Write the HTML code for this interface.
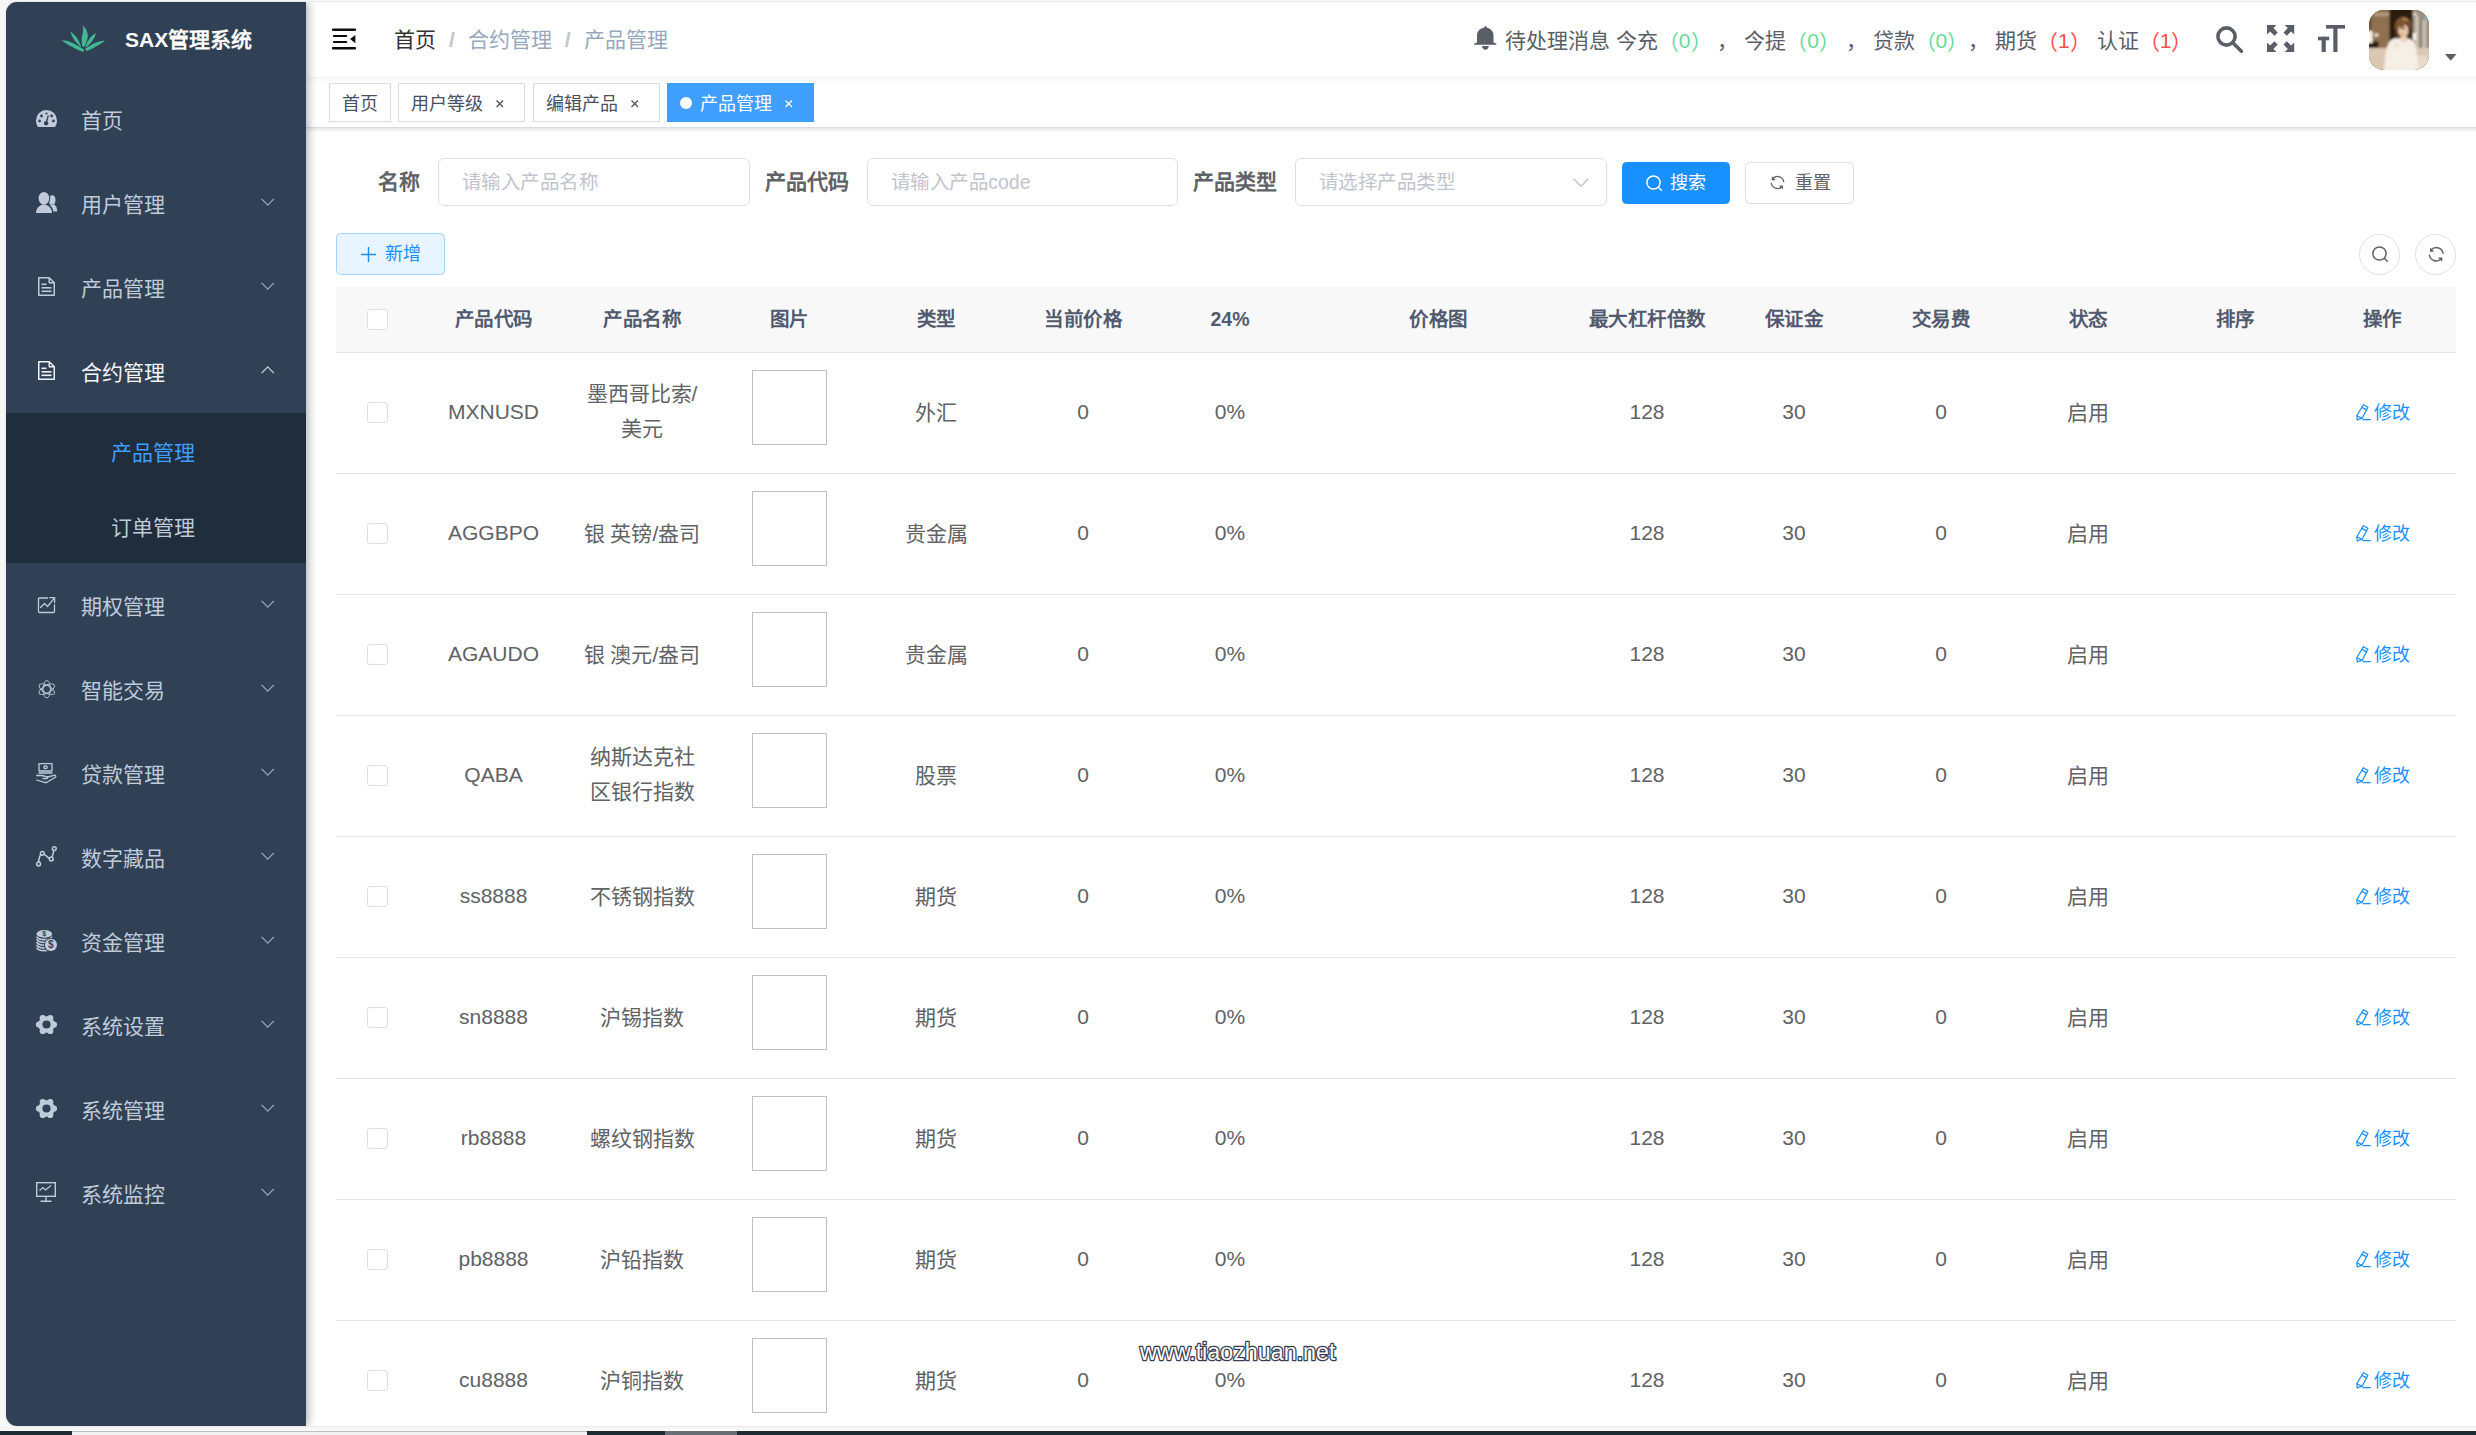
<!DOCTYPE html>
<html lang="zh-CN">
<head>
<meta charset="utf-8">
<title>SAX管理系统</title>
<style>
*{box-sizing:border-box;margin:0;padding:0}
html,body{width:2476px;height:1435px;overflow:hidden;background:#f7f7f7}
body{position:relative;text-spacing-trim:space-all;font-family:"Liberation Sans",sans-serif;font-size:21px;font-weight:400;font-style:normal;color:#606266;line-height:1.2;text-align:left}
div,span,b,i,em,a{font-family:"Liberation Sans",sans-serif}
.a{position:absolute;display:block;white-space:nowrap}
svg{position:absolute;display:block;overflow:visible}
/* frame */
#win{left:6px;top:2px;width:2480px;height:1424px;background:#fff;border-radius:11px 0 0 11px;overflow:hidden;box-shadow:0 0 2px rgba(0,0,0,.18)}
#bt{left:0;top:1431px;width:2476px;height:4px;background:#1f2b33}
#bt1{left:72px;top:1431px;width:515px;height:4px;background:#f3f3f3;border-top:1px solid #bdbdbd}
#bt2{left:665px;top:1431px;width:72px;height:4px;background:#697074}
#btw{left:0;top:1430px;width:2476px;height:1px;background:#fdfdfd}
/* sidebar (coords relative to #win) */
#side{left:0;top:0;width:300px;height:1424px;background:#304156;z-index:5;box-shadow:2px 0 9px rgba(0,21,41,.35)}
#logoT{left:119px;top:0;height:75px;line-height:75px;font-size:21px;font-weight:700;color:#fff}
.mt{left:75px;margin-top:2px;height:84px;line-height:84px;font-size:21px;color:#bfcbd9}
.st{left:105px;margin-top:2px;height:75px;line-height:75px;font-size:21px;color:#bfcbd9}
#sub{left:0;top:411px;width:300px;height:150px;background:#1f2d3d}
/* navbar */
#nav{left:300px;top:0;width:2180px;height:75px;background:#fff;box-shadow:0 1px 6px rgba(0,21,41,.08);z-index:3}
#bc{left:88px;top:0;height:75px;line-height:75px;font-size:21px;color:#97a8be}
#bc b{font-weight:400;color:#303133}
#bc i{font-style:normal;font-weight:700;color:#c0c4cc;margin:0 13px}
#msg{left:1199px;top:1px;height:75px;line-height:75px;font-size:21px;color:#5a5e66}
#msg .g{color:#66db9b}
#msg s{text-decoration:none;position:relative;top:2px}
#msg .r{color:#ff4d4f}
#ava{left:2063px;top:8px;width:60px;height:60px;border-radius:15px;overflow:hidden;background:#8a6a4c}
/* tags */
#tags{left:300px;top:75px;width:2180px;height:51px;background:#fff;border-bottom:1px solid #d8dce5;box-shadow:0 1px 5px 0 rgba(0,0,0,.12),0 0 5px 0 rgba(0,0,0,.04);z-index:2}
.tag{top:6px;height:39px;line-height:40px;border:1px solid #d8dce5;color:#495060;background:#fff;font-size:18px;text-align:left}
.tag.on{background:#409eff;border-color:#409eff;color:#fff}
.tag span{position:absolute;top:0;left:12px;white-space:nowrap}
.tag em{position:absolute;top:0;font-style:normal;font-size:17px;line-height:39px}
.tag u{position:absolute;left:12px;top:12px;width:12px;height:12px;border-radius:50%;background:#fff}
/* form */
.lb{height:48px;line-height:48px;font-size:21px;font-weight:700;color:#606266;text-align:right;width:102px;padding-right:18px;top:156px}
.inp{letter-spacing:-.5px;top:156px;height:48px;border:1px solid #dcdfe6;border-radius:6px;background:#fff;font-size:19.5px;line-height:46px;color:#c0c4cc;padding-left:22.5px}
.btn{height:42px;border-radius:4.5px;font-size:18px;line-height:40px;border:1px solid #dcdfe6;background:#fff;color:#606266}
.btn span{position:absolute;top:0;white-space:nowrap}
.circ{top:231.5px;width:41px;height:41px;border-radius:50%;border:1px solid #dcdfe6;background:#fff}
.ls0{letter-spacing:0}
/* table */
#th{left:330px;top:285px;width:2119.5px;height:65px;background:#f8f8f9;border-bottom:1px solid #dfe6ec}
.h{letter-spacing:-.5px;top:285px;height:65px;line-height:65px;font-size:19.5px;font-weight:700;color:#515a6e;text-align:center}
.c{font-size:21px;color:#606266;text-align:center;line-height:35px}
.ln{left:330px;width:2119.5px;height:1px;background:#dfe6ec}
.cb{width:21px;height:21px;border:1px solid #dcdfe6;border-radius:3px;background:#fff;left:361px}
.im{left:746px;width:75px;height:75px;border:1px solid #c0c0c0;background:#fff}
.ed{left:2368px;font-size:18px;color:#1890ff;line-height:30px;height:30px}
</style>
</head>
<body>
<div class="a" id="win">
<div class="a" id="side">
<svg style="left:55px;top:22px" width="45" height="29" viewBox="0 0 45 29"><g fill="#41b993"><path d="M21.400 1.200C24.500 3.500 26.500 7 26.800 11.100 27 15 25 19.500 23.200 23.100L21.400 22.200C20.300 18.500 20.500 14 21.500 10 22.300 7 22.600 4 21.400 1.200Z"/><path d="M9.300 7.700Q15.500 10.500 20.100 22.200L19.200 22.400Q12.200 16.500 9.300 7.700Z"/><path d="M35.200 8.900Q28 12 24.300 22.800L25.200 23.200Q32.500 17.500 35.200 8.900Z"/><path d="M.7 16.300C7 15.800 15 20.500 23 25.600L22.300 28C16 26 6.500 21 .7 16.300Z"/><path d="M44.100 16.400C38 16.500 30 20.500 24.300 24.600L25 26.900C31 25 39.500 20.500 44.100 16.400Z"/></g></svg>
<div class="a" id="logoT">SAX管理系统</div>
<svg style="left:30px;top:108px" width="21" height="17" viewBox="0 0 21 17" ><path fill="#bfcbd9" d="M10.5 0A10.5 10.5 0 0 0 0 10.5c0 2 .5 3.800 1.400 5.400.3.600.9 1.100 1.700 1.100h14.800c.8 0 1.400-.5 1.700-1.100.9-1.600 1.400-3.400 1.400-5.400A10.500 10.500 0 0 0 10.500 0z"/><g fill="#304156"><circle cx="3.600" cy="11" r="1.400"/><circle cx="5.500" cy="6" r="1.400"/><circle cx="15.600" cy="6" r="1.400"/><circle cx="17.400" cy="11" r="1.400"/><circle cx="10.500" cy="3.500" r="1.100"/><path d="M11.600 5.200l1.300.4-1.500 5.900a2.200 2.200 0 1 1-1.300-.4z"/></g></svg>
<div class="a mt" style="top:75px">首页</div>
<svg style="left:30px;top:190px" width="21.5" height="21" viewBox="0 0 21.500 21" ><g fill="#bfcbd9"><ellipse cx="16.100" cy="8" rx="3.400" ry="4.700"/><path d="M13 12.300C15 13.300 17 13.300 18.300 12.600 20.300 14 21.200 16 21.200 19.400H17.300C17 16.300 15.300 14.300 13 12.300Z"/></g><g fill="#304156" stroke="#304156" stroke-width="2.200" stroke-linejoin="round"><ellipse cx="7.900" cy="6.300" rx="5.300" ry="6.300"/><path d="M0 20.900C0 16.500 2.500 14.300 6.200 12.400H9.600C13.300 14.300 16 16.500 16 20.900Z"/></g><g fill="#bfcbd9"><ellipse cx="7.900" cy="6.300" rx="5.300" ry="6.300"/><path d="M0 20.900C0 16.500 2.500 14.300 6.200 12.400H9.600C13.300 14.300 16 16.500 16 20.900Z"/></g></svg>
<div class="a mt" style="top:159px">用户管理</div>
<svg style="left:254.750px;top:196px" width="13.500" height="8" viewBox="0 0 13.500 8"><path d="M.6.9L6.750 7.100 12.900.9" fill="none" stroke="#9aa7b8" stroke-width="1.300"/></svg>
<svg style="left:32px;top:275px" width="17" height="19" viewBox="0 0 17 19" ><g fill="none" stroke="#bfcbd9" stroke-width="1.5" stroke-linejoin="round"><path d="M.75.75h10.500l5 5v12.500H.75z"/><path d="M11.250.75v5h5"/></g><g fill="#bfcbd9"><rect x="3.500" y="6.500" width="5" height="1.600"/><rect x="3.500" y="10" width="10" height="1.600"/><rect x="3.500" y="13.500" width="10" height="1.600"/></g></svg>
<div class="a mt" style="top:243px">产品管理</div>
<svg style="left:254.750px;top:280px" width="13.500" height="8" viewBox="0 0 13.500 8"><path d="M.6.9L6.750 7.100 12.900.9" fill="none" stroke="#9aa7b8" stroke-width="1.300"/></svg>
<svg style="left:32px;top:359px" width="17" height="19" viewBox="0 0 17 19" ><g fill="none" stroke="#f0f2f5" stroke-width="1.5" stroke-linejoin="round"><path d="M.75.75h10.500l5 5v12.500H.75z"/><path d="M11.250.75v5h5"/></g><g fill="#f0f2f5"><rect x="3.500" y="6.500" width="5" height="1.600"/><rect x="3.500" y="10" width="10" height="1.600"/><rect x="3.500" y="13.500" width="10" height="1.600"/></g></svg>
<div class="a mt" style="top:327px;color:#f4f4f5">合约管理</div>
<svg style="left:254.750px;top:364px" width="13.500" height="8" viewBox="0 0 13.500 8"><path d="M.6 7.100L6.750.9l6.150 6.200" fill="none" stroke="#c8d0da" stroke-width="1.300"/></svg>
<svg style="left:32px;top:594.5px" width="17.5" height="16.5" viewBox="0 0 17.500 16.500" ><g fill="none" stroke="#bfcbd9" stroke-width="1.300" stroke-linejoin="round" stroke-linecap="round"><path d="M9.500 1H1.500a1 1 0 0 0-1 1v12.500a1 1 0 0 0 1 1h14a1 1 0 0 0 1-1V8"/><path d="M2.500 10.500l4-4 3 3L16.500.8"/><path d="M11.800.7h4.800v4.800"/></g></svg>
<div class="a mt" style="top:561px">期权管理</div>
<svg style="left:254.750px;top:598px" width="13.500" height="8" viewBox="0 0 13.500 8"><path d="M.6.9L6.750 7.100 12.900.9" fill="none" stroke="#9aa7b8" stroke-width="1.300"/></svg>
<svg style="left:32px;top:677.5px" width="17.5" height="18.5" viewBox="0 0 17.500 18.500" ><g fill="none" stroke="#bfcbd9" stroke-width=".9"><ellipse cx="8.750" cy="9.250" rx="3.700" ry="8.700"/><ellipse cx="8.750" cy="9.250" rx="3.700" ry="8.700" transform="rotate(60 8.750 9.250)"/><ellipse cx="8.750" cy="9.250" rx="3.700" ry="8.700" transform="rotate(120 8.750 9.250)"/><circle cx="8.750" cy="9.250" r="4.300"/></g></svg>
<div class="a mt" style="top:645px">智能交易</div>
<svg style="left:254.750px;top:682px" width="13.500" height="8" viewBox="0 0 13.500 8"><path d="M.6.9L6.750 7.100 12.900.9" fill="none" stroke="#9aa7b8" stroke-width="1.300"/></svg>
<svg style="left:30px;top:760.5px" width="21" height="20" viewBox="0 0 21 20" ><g fill="none" stroke="#bfcbd9" stroke-width="1.300" stroke-linejoin="round" stroke-linecap="round"><rect x="3" y=".7" width="13" height="7.300"/><ellipse cx="9.500" cy="4.300" rx="1.700" ry="1.300"/><path d="M3 10h13"/><path d="M.7 12.500h5l5 1.200c1.200.3 1.200 1.800 0 1.800H7"/><path d="M11.500 14l6.500-1.700c1.700-.4 2.500 1.100 1.300 1.900L11 19.300c-.8.300-1.600.3-2.400 0L.7 17"/></g></svg>
<div class="a mt" style="top:729px">贷款管理</div>
<svg style="left:254.750px;top:766px" width="13.500" height="8" viewBox="0 0 13.500 8"><path d="M.6.9L6.750 7.100 12.900.9" fill="none" stroke="#9aa7b8" stroke-width="1.300"/></svg>
<svg style="left:30px;top:844px" width="21" height="21" viewBox="0 0 21 21" ><g fill="none" stroke="#bfcbd9" stroke-width="1.500" stroke-linecap="round"><path d="M2.600 16.400C3 11 4 8.500 6 7.500c2.500-1 5 4.800 8.300 5.400 2-.2 2.600-4.700 3.600-8.400"/><circle cx="2.600" cy="18" r="1.900" fill="#304156"/><circle cx="6.300" cy="7.300" r="1.900" fill="#304156"/><circle cx="15.300" cy="13" r="1.900" fill="#304156"/><circle cx="18.300" cy="2.700" r="1.900" fill="#304156"/></g></svg>
<div class="a mt" style="top:813px">数字藏品</div>
<svg style="left:254.750px;top:850px" width="13.500" height="8" viewBox="0 0 13.500 8"><path d="M.6.9L6.750 7.100 12.900.9" fill="none" stroke="#9aa7b8" stroke-width="1.300"/></svg>
<svg style="left:30px;top:928px" width="21" height="21" viewBox="0 0 21 21" ><ellipse cx="8.300" cy="3.900" rx="7.900" ry="3.800" fill="#bfcbd9"/><path d="M.9 6.40A7.4 3.300 0 0 0 15.700 6.40" fill="none" stroke="#bfcbd9" stroke-width="1.700"/><path d="M.9 9.15A7.4 3.300 0 0 0 15.700 9.15" fill="none" stroke="#bfcbd9" stroke-width="1.700"/><path d="M.9 11.90A7.4 3.300 0 0 0 15.700 11.90" fill="none" stroke="#bfcbd9" stroke-width="1.700"/><path d="M.9 14.65A7.4 3.300 0 0 0 15.700 14.65" fill="none" stroke="#bfcbd9" stroke-width="1.700"/><path d="M.9 17.40A7.4 3.300 0 0 0 15.700 17.40" fill="none" stroke="#bfcbd9" stroke-width="1.700"/><circle cx="14.900" cy="14.900" r="7.100" fill="#304156"/><circle cx="14.900" cy="14.900" r="6.100" fill="#bfcbd9"/><text x="8.300" y="6.300" font-size="7" font-weight="700" text-anchor="middle" fill="#304156" font-family="Liberation Sans,sans-serif">$</text><text x="14.900" y="18.400" font-size="10" font-weight="700" text-anchor="middle" fill="#304156" font-family="Liberation Sans,sans-serif">$</text></svg>
<div class="a mt" style="top:897px">资金管理</div>
<svg style="left:254.750px;top:934px" width="13.500" height="8" viewBox="0 0 13.500 8"><path d="M.6.9L6.750 7.100 12.900.9" fill="none" stroke="#9aa7b8" stroke-width="1.300"/></svg>
<svg style="left:30px;top:1012px" width="21" height="21" viewBox="0 0 21 21" ><g fill="#bfcbd9"><circle cx="10.5" cy="10.5" r="8.300"/><circle cx="18.00" cy="10.50" r="3.100"/><circle cx="14.25" cy="17.00" r="3.100"/><circle cx="6.75" cy="17.00" r="3.100"/><circle cx="3.00" cy="10.50" r="3.100"/><circle cx="6.75" cy="4.00" r="3.100"/><circle cx="14.25" cy="4.00" r="3.100"/></g><circle cx="10.5" cy="10.5" r="4.100" fill="#304156"/></svg>
<div class="a mt" style="top:981px">系统设置</div>
<svg style="left:254.750px;top:1018px" width="13.500" height="8" viewBox="0 0 13.500 8"><path d="M.6.9L6.750 7.100 12.900.9" fill="none" stroke="#9aa7b8" stroke-width="1.300"/></svg>
<svg style="left:30px;top:1096px" width="21" height="21" viewBox="0 0 21 21" ><g fill="#bfcbd9"><circle cx="10.5" cy="10.5" r="8.300"/><circle cx="18.00" cy="10.50" r="3.100"/><circle cx="14.25" cy="17.00" r="3.100"/><circle cx="6.75" cy="17.00" r="3.100"/><circle cx="3.00" cy="10.50" r="3.100"/><circle cx="6.75" cy="4.00" r="3.100"/><circle cx="14.25" cy="4.00" r="3.100"/></g><circle cx="10.5" cy="10.5" r="4.100" fill="#304156"/></svg>
<div class="a mt" style="top:1065px">系统管理</div>
<svg style="left:254.750px;top:1102px" width="13.500" height="8" viewBox="0 0 13.500 8"><path d="M.6.9L6.750 7.100 12.900.9" fill="none" stroke="#9aa7b8" stroke-width="1.300"/></svg>
<svg style="left:30px;top:1180px" width="20" height="20" viewBox="0 0 20 20" ><g fill="none" stroke="#bfcbd9" stroke-width="1.400" stroke-linejoin="miter"><rect x=".7" y=".7" width="18.600" height="13.600"/><path d="M10 14.300v4.500M4.500 19.200h11"/><path d="M3.500 8.500l3.500-3 2.500 2.500 5.500-4.500" stroke-width="1.200"/></g></svg>
<div class="a mt" style="top:1149px">系统监控</div>
<svg style="left:254.750px;top:1186px" width="13.500" height="8" viewBox="0 0 13.500 8"><path d="M.6.9L6.750 7.100 12.900.9" fill="none" stroke="#9aa7b8" stroke-width="1.300"/></svg>
<div class="a" id="sub"></div>
<div class="a st" style="top:411px;color:#409eff">产品管理</div>
<div class="a st" style="top:486px">订单管理</div>
</div>
<div class="a" id="nav">
<svg style="left:26px;top:26px" width="24" height="22" viewBox="0 0 24 22"><g fill="#0c0c0c"><rect x="0" y=".4" width="24" height="2.500" rx=".8"/><rect x=".9" y="6.900" width="14.300" height="2.150" rx=".8"/><rect x=".9" y="12.900" width="14.300" height="2.150" rx=".8"/><rect x="0" y="18.900" width="24" height="2.500" rx=".8"/><path d="M23.400 7v8.200l-5.300-4.100z"/></g></svg>
<div class="a" id="bc"><b>首页</b><i>/</i>合约管理<i>/</i>产品管理</div>
<svg style="left:1168px;top:24px" width="22.500" height="24" viewBox="0 0 22.500 24"><g fill="#5a5e66"><path d="M10.400 1.600C10.400.6 10.900 0 11.500 0 12.100 0 12.600.6 12.600 1.600 16.500 2.300 19.500 5.500 19.500 9.500V16.600L22.300 17.600V18.800H.2V17.600L3 16.600V9.500C3 5.500 6 2.300 10.400 1.600Z"/><path d="M8 20H14.800C14.500 22.300 13.200 23.800 11.400 23.800 9.600 23.800 8.300 22.300 8 20Z"/></g></svg>
<div class="a" id="msg">待处理消息 今充<span class="g"><s>（</s>0<s>）</s></span> ， 今提<span class="g"><s>（</s>0<s>）</s></span> ， 贷款<span class="g"><s>（</s>0<s>）</s></span>， 期货<span class="r"><s>（</s>1<s>）</s></span> 认证<span class="r"><s>（</s>1<s>）</s></span></div>
<svg style="left:1909.500px;top:24px" width="27.500" height="27" viewBox="0 0 27.500 27"><g fill="none" stroke="#5a5e66" stroke-width="3.600"><circle cx="10.500" cy="10.500" r="8.600"/><path d="M16.800 16.800l8.600 8.400" stroke-linecap="round"/></g></svg>
<svg style="left:1960.800px;top:23px" width="27.200" height="27" viewBox="0 0 27.200 27"><g fill="#5a5e66"><path d="M0 0h9.500L6.400 3.100l4.300 4.300-3.300 3.300-4.300-4.300L0 9.500z"/><path d="M0 0h9.500L6.400 3.100l4.300 4.300-3.300 3.300-4.300-4.300L0 9.500z" transform="translate(27.200 0) scale(-1 1)"/><path d="M0 0h9.500L6.400 3.100l4.300 4.300-3.300 3.300-4.300-4.300L0 9.500z" transform="translate(0 27) scale(1 -1)"/><path d="M0 0h9.500L6.400 3.100l4.300 4.300-3.300 3.300-4.300-4.300L0 9.500z" transform="translate(27.200 27) scale(-1 -1)"/></g></svg>
<svg style="left:2012px;top:23px" width="27" height="27" viewBox="0 0 27 27"><g fill="#5a5e66"><rect x="8" y="0" width="19" height="3.600"/><rect x="15.300" y="0" width="4.200" height="27"/><rect x="0" y="11.700" width="11.200" height="3.600"/><rect x="3.600" y="11.700" width="4.200" height="15.300"/></g></svg>
<div class="a" id="ava"><svg style="left:0;top:0" width="60" height="60" viewBox="0 0 60 60"><defs><filter id="bl" x="-10%" y="-10%" width="120%" height="120%"><feGaussianBlur stdDeviation=".9"/></filter></defs><rect width="60" height="60" fill="#8e6f4e"/><g filter="url(#bl)"><rect x="-6" y="-6" width="28" height="46" fill="#8f7050"/><rect x="5" y="3" width="15" height="3" fill="#b29c82"/><rect x="-6" y="6" width="9" height="34" fill="#755638"/><rect x="20.500" y="-6" width="24" height="37" fill="#2a1c11"/><rect x="43.500" y="-6" width="24" height="56" fill="#9d9080"/><rect x="46" y="6" width="4" height="42" fill="#c9c0b2"/><rect x="53" y="10" width="4.500" height="36" fill="#c4bbad"/><rect x="50.500" y="8" width="2" height="40" fill="#7f7466"/><rect x="-6" y="38" width="74" height="30" fill="#dbc8b3"/><rect x="44" y="46" width="24" height="22" fill="#e6dccb"/><rect x="-6" y="31.500" width="15.500" height="6.500" fill="#2d1f14"/><rect x="-6" y="21" width="9.500" height="12" fill="#fbf5ec"/><rect x="5.500" y="23.500" width="4" height="3" fill="#f3e6d2"/><rect x="44" y="23" width="3" height="7" fill="#fbf8f2"/><rect x="44.500" y="3" width="3" height="2.500" fill="#f1ede6"/><circle cx="58" cy="8" r="1.800" fill="#35d3d6"/><path d="M15.500 70C15 48 17 36 21 31c3-3 8-3.500 12-3 5-.5 10 1 12 4 3 5 4 16 4 38z" fill="#f6efe6"/><path d="M31 30l1.500-3.500h5L39 30l-4 3z" fill="#ecd3bd"/><ellipse cx="34.300" cy="20.500" rx="5.300" ry="6.800" fill="#e9c6a6"/><path d="M26 21c-1.500-9 3-14.500 9-14 6 .5 8.500 6 6.500 13.500-1-5-2.500-7.500-5-8-1 3.500-2.500 6-4.500 7.500-.5-2-1-3.500-2-4-1.500 1.500-2.500 3.500-4 5z" fill="#80542f"/><path d="M33 8c3-1 6 1 7 4-2-1.500-4-2-6-1.500z" fill="#b5855a"/><path d="M26 20c0 4 1 7 2.500 9l2-1c-1.500-2.500-2-5-2-8z" fill="#5c3a20"/><path d="M41 19c.5 4 0 7-1 9l-1.500-1c1-2.500 1.200-5 1-8z" fill="#5c3a20"/><circle cx="35.300" cy="18.500" r=".9" fill="#3a2417"/><ellipse cx="33" cy="24.300" rx="1" ry=".6" fill="#c9675a"/><path d="M24 33c1-1.500 4-1.500 6 0l1 4-5 1z" fill="#f3e3d3"/></g></svg></div>
<svg style="left:2138.500px;top:52px" width="11.500" height="6.700" viewBox="0 0 11.500 6.700"><path d="M0 0h11.500L5.750 6.700z" fill="#5a5e66"/></svg>
</div>
<div class="a" id="tags">
<div class="a tag" style="left:23.250px;width:61.500px"><span>首页</span></div>
<div class="a tag" style="left:92.250px;width:126.500px"><span>用户等级</span><svg style="left:97px;top:15.5px" width="7.500" height="7.500" viewBox="0 0 7.500 7.500"><path d="M.5.5l6.500 6.500M7 .5L.5 7" stroke="#495060" stroke-width="1.250" fill="none"/></svg></div>
<div class="a tag" style="left:227.250px;width:126.500px"><span>编辑产品</span><svg style="left:97px;top:15.5px" width="7.500" height="7.500" viewBox="0 0 7.500 7.500"><path d="M.5.5l6.500 6.500M7 .5L.5 7" stroke="#495060" stroke-width="1.250" fill="none"/></svg></div>
<div class="a tag on" style="left:361px;width:147px"><u style="left:12px;top:13px"></u><span style="left:32px">产品管理</span><svg style="left:117.25px;top:15.5px" width="7.500" height="7.500" viewBox="0 0 7.500 7.500"><path d="M.5.5l6.500 6.500M7 .5L.5 7" stroke="#fff" stroke-width="1.250" fill="none"/></svg></div>
</div>
<div class="a lb" style="left:330px">名称</div>
<div class="a inp" style="left:432.250px;width:311.250px">请输入产品名称</div>
<div class="a lb" style="left:758.500px">产品代码</div>
<div class="a inp" style="left:861.250px;width:310.500px">请输入产品<span class="ls0">code</span></div>
<div class="a lb" style="left:1186.500px">产品类型</div>
<div class="a inp" style="left:1289.250px;width:311.250px">请选择产品类型</div>
<svg style="left:1567px;top:175.500px" width="16" height="9.500" viewBox="0 0 16 9.500"><path d="M.7.800L8 8.300 15.300.8" fill="none" stroke="#c0c4cc" stroke-width="1.400"/></svg>
<div class="a btn" style="left:1616px;top:160px;width:108px;background:#1890ff;border-color:#1890ff;color:#fff"><svg style="left:23px;top:11.5px" width="16" height="16" viewBox="0 0 16 16"><g fill="none" stroke="#fff" stroke-width="1.500"><circle cx="7.500" cy="7.500" r="6.600"/><path d="M12.300 12.300l3 3" stroke-linecap="round"/></g></svg><span style="left:47px">搜索</span></div>
<div class="a btn" style="left:1739px;top:160px;width:108.750px"><svg style="left:24px;top:11.5px" width="15" height="15" viewBox="0 0 15 15"><g fill="none" stroke="#606266" stroke-width="1.250"><path d="M2.900 3.500A6.300 6.300 0 0 1 13.800 7.300"/><path d="M1.200 7.700A6.300 6.300 0 0 0 12.100 11.500"/></g><g fill="#606266"><path d="M1.900 1.300v4.100l3.800-.5z"/><path d="M9.100 10.500h4l-.3 3.900z"/></g></svg><span style="left:49px">重置</span></div>
<div class="a btn" style="left:330px;top:231px;width:108.500px;background:#e8f4ff;border-color:#a3d3ff;color:#1890ff"><svg style="left:24px;top:12.500px" width="15" height="15" viewBox="0 0 15 15"><path d="M7.500 0v15M0 7.500h15" stroke="#1890ff" stroke-width="1.400" fill="none"/></svg><span style="left:47.500px">新增</span></div>
<div class="a circ" style="left:2353px"><svg style="left:11.5px;top:11.5px" width="16" height="16" viewBox="0 0 16 16"><g fill="none" stroke="#606266" stroke-width="1.500"><circle cx="7.500" cy="7.500" r="6.600"/><path d="M12.300 12.300l3 3" stroke-linecap="round"/></g></svg></div>
<div class="a circ" style="left:2409px"><svg style="left:11.5px;top:11.5px" width="16.5" height="16.5" viewBox="0 0 15 15"><g fill="none" stroke="#606266" stroke-width="1.250"><path d="M2.900 3.500A6.300 6.300 0 0 1 13.800 7.300"/><path d="M1.200 7.700A6.300 6.300 0 0 0 12.100 11.500"/></g><g fill="#606266"><path d="M1.900 1.300v4.100l3.800-.5z"/><path d="M9.100 10.500h4l-.3 3.900z"/></g></svg></div>
<div class="a" id="th" style="height:66px"></div>
<div class="a cb" style="top:307px"></div>
<div class="a h" style="left:412.5px;width:150px">产品代码</div>
<div class="a h" style="left:562.5px;width:147px">产品名称</div>
<div class="a h" style="left:709.5px;width:147px">图片</div>
<div class="a h" style="left:856.5px;width:147px">类型</div>
<div class="a h" style="left:1003.5px;width:147px">当前价格</div>
<div class="a h" style="left:1150.5px;width:147px"><span class="ls0">24%</span></div>
<div class="a h" style="left:1297.5px;width:270px">价格图</div>
<div class="a h" style="left:1567.5px;width:147px">最大杠杆倍数</div>
<div class="a h" style="left:1714.5px;width:147px">保证金</div>
<div class="a h" style="left:1861.5px;width:147px">交易费</div>
<div class="a h" style="left:2008.5px;width:147px">状态</div>
<div class="a h" style="left:2155.5px;width:147px">排序</div>
<div class="a h" style="left:2302.5px;width:147px">操作</div>
<div class="a cb" style="top:400px"></div>
<div class="a c" style="left:412.5px;width:150px;top:392.0px">MXNUSD</div>
<div class="a c" style="left:562.5px;width:147px;top:374px">墨西哥比索/</div>
<div class="a c" style="left:562.5px;width:147px;top:409px">美元</div>
<div class="a im" style="top:368px"></div>
<div class="a c" style="left:856.5px;width:147px;top:392.5px">外汇</div>
<div class="a c" style="left:1003.5px;width:147px;top:392.0px">0</div>
<div class="a c" style="left:1150.5px;width:147px;top:392.0px">0%</div>
<div class="a c" style="left:1567.5px;width:147px;top:392.0px">128</div>
<div class="a c" style="left:1714.5px;width:147px;top:392.0px">30</div>
<div class="a c" style="left:1861.5px;width:147px;top:392.0px">0</div>
<div class="a c" style="left:2008.5px;width:147px;top:392.5px">启用</div>
<svg style="left:2350.2px;top:401.5px" width="15" height="16.500" viewBox="0 0 15 16.500"><g fill="none" stroke="#1890ff" stroke-width="1.250" stroke-linejoin="round" stroke-linecap="round"><path d="M7.300.7l4.600 2.500-5.800 11L1.300 16l-.5-4.300z"/><path d="M5.900 3.400l4.600 2.500"/><path d="M.9 11.800l4.900 2.600"/><path d="M7 15.700h7.300"/></g></svg>
<div class="a ed" style="top:396px">修改</div>
<div class="a ln" style="top:471px"></div>
<div class="a cb" style="top:521px"></div>
<div class="a c" style="left:412.5px;width:150px;top:513.0px">AGGBPO</div>
<div class="a c" style="left:562.5px;width:147px;top:513.5px">银 英镑/盎司</div>
<div class="a im" style="top:489px"></div>
<div class="a c" style="left:856.5px;width:147px;top:513.5px">贵金属</div>
<div class="a c" style="left:1003.5px;width:147px;top:513.0px">0</div>
<div class="a c" style="left:1150.5px;width:147px;top:513.0px">0%</div>
<div class="a c" style="left:1567.5px;width:147px;top:513.0px">128</div>
<div class="a c" style="left:1714.5px;width:147px;top:513.0px">30</div>
<div class="a c" style="left:1861.5px;width:147px;top:513.0px">0</div>
<div class="a c" style="left:2008.5px;width:147px;top:513.5px">启用</div>
<svg style="left:2350.2px;top:522.5px" width="15" height="16.500" viewBox="0 0 15 16.500"><g fill="none" stroke="#1890ff" stroke-width="1.250" stroke-linejoin="round" stroke-linecap="round"><path d="M7.300.7l4.600 2.500-5.800 11L1.300 16l-.5-4.300z"/><path d="M5.900 3.400l4.600 2.500"/><path d="M.9 11.800l4.900 2.600"/><path d="M7 15.700h7.300"/></g></svg>
<div class="a ed" style="top:517px">修改</div>
<div class="a ln" style="top:592px"></div>
<div class="a cb" style="top:642px"></div>
<div class="a c" style="left:412.5px;width:150px;top:634.0px">AGAUDO</div>
<div class="a c" style="left:562.5px;width:147px;top:634.5px">银 澳元/盎司</div>
<div class="a im" style="top:610px"></div>
<div class="a c" style="left:856.5px;width:147px;top:634.5px">贵金属</div>
<div class="a c" style="left:1003.5px;width:147px;top:634.0px">0</div>
<div class="a c" style="left:1150.5px;width:147px;top:634.0px">0%</div>
<div class="a c" style="left:1567.5px;width:147px;top:634.0px">128</div>
<div class="a c" style="left:1714.5px;width:147px;top:634.0px">30</div>
<div class="a c" style="left:1861.5px;width:147px;top:634.0px">0</div>
<div class="a c" style="left:2008.5px;width:147px;top:634.5px">启用</div>
<svg style="left:2350.2px;top:643.5px" width="15" height="16.500" viewBox="0 0 15 16.500"><g fill="none" stroke="#1890ff" stroke-width="1.250" stroke-linejoin="round" stroke-linecap="round"><path d="M7.300.7l4.600 2.500-5.800 11L1.300 16l-.5-4.300z"/><path d="M5.900 3.400l4.600 2.500"/><path d="M.9 11.800l4.900 2.600"/><path d="M7 15.700h7.300"/></g></svg>
<div class="a ed" style="top:638px">修改</div>
<div class="a ln" style="top:713px"></div>
<div class="a cb" style="top:763px"></div>
<div class="a c" style="left:412.5px;width:150px;top:755.0px">QABA</div>
<div class="a c" style="left:562.5px;width:147px;top:737px">纳斯达克社</div>
<div class="a c" style="left:562.5px;width:147px;top:772px">区银行指数</div>
<div class="a im" style="top:731px"></div>
<div class="a c" style="left:856.5px;width:147px;top:755.5px">股票</div>
<div class="a c" style="left:1003.5px;width:147px;top:755.0px">0</div>
<div class="a c" style="left:1150.5px;width:147px;top:755.0px">0%</div>
<div class="a c" style="left:1567.5px;width:147px;top:755.0px">128</div>
<div class="a c" style="left:1714.5px;width:147px;top:755.0px">30</div>
<div class="a c" style="left:1861.5px;width:147px;top:755.0px">0</div>
<div class="a c" style="left:2008.5px;width:147px;top:755.5px">启用</div>
<svg style="left:2350.2px;top:764.5px" width="15" height="16.500" viewBox="0 0 15 16.500"><g fill="none" stroke="#1890ff" stroke-width="1.250" stroke-linejoin="round" stroke-linecap="round"><path d="M7.300.7l4.600 2.500-5.800 11L1.300 16l-.5-4.300z"/><path d="M5.900 3.400l4.600 2.500"/><path d="M.9 11.800l4.900 2.600"/><path d="M7 15.700h7.300"/></g></svg>
<div class="a ed" style="top:759px">修改</div>
<div class="a ln" style="top:834px"></div>
<div class="a cb" style="top:884px"></div>
<div class="a c" style="left:412.5px;width:150px;top:876.0px">ss8888</div>
<div class="a c" style="left:562.5px;width:147px;top:876.5px">不锈钢指数</div>
<div class="a im" style="top:852px"></div>
<div class="a c" style="left:856.5px;width:147px;top:876.5px">期货</div>
<div class="a c" style="left:1003.5px;width:147px;top:876.0px">0</div>
<div class="a c" style="left:1150.5px;width:147px;top:876.0px">0%</div>
<div class="a c" style="left:1567.5px;width:147px;top:876.0px">128</div>
<div class="a c" style="left:1714.5px;width:147px;top:876.0px">30</div>
<div class="a c" style="left:1861.5px;width:147px;top:876.0px">0</div>
<div class="a c" style="left:2008.5px;width:147px;top:876.5px">启用</div>
<svg style="left:2350.2px;top:885.5px" width="15" height="16.500" viewBox="0 0 15 16.500"><g fill="none" stroke="#1890ff" stroke-width="1.250" stroke-linejoin="round" stroke-linecap="round"><path d="M7.300.7l4.600 2.500-5.800 11L1.300 16l-.5-4.300z"/><path d="M5.900 3.400l4.600 2.500"/><path d="M.9 11.800l4.900 2.600"/><path d="M7 15.700h7.300"/></g></svg>
<div class="a ed" style="top:880px">修改</div>
<div class="a ln" style="top:955px"></div>
<div class="a cb" style="top:1005px"></div>
<div class="a c" style="left:412.5px;width:150px;top:997.0px">sn8888</div>
<div class="a c" style="left:562.5px;width:147px;top:997.5px">沪锡指数</div>
<div class="a im" style="top:973px"></div>
<div class="a c" style="left:856.5px;width:147px;top:997.5px">期货</div>
<div class="a c" style="left:1003.5px;width:147px;top:997.0px">0</div>
<div class="a c" style="left:1150.5px;width:147px;top:997.0px">0%</div>
<div class="a c" style="left:1567.5px;width:147px;top:997.0px">128</div>
<div class="a c" style="left:1714.5px;width:147px;top:997.0px">30</div>
<div class="a c" style="left:1861.5px;width:147px;top:997.0px">0</div>
<div class="a c" style="left:2008.5px;width:147px;top:997.5px">启用</div>
<svg style="left:2350.2px;top:1006.5px" width="15" height="16.500" viewBox="0 0 15 16.500"><g fill="none" stroke="#1890ff" stroke-width="1.250" stroke-linejoin="round" stroke-linecap="round"><path d="M7.300.7l4.600 2.500-5.800 11L1.300 16l-.5-4.300z"/><path d="M5.900 3.400l4.600 2.500"/><path d="M.9 11.800l4.900 2.600"/><path d="M7 15.700h7.300"/></g></svg>
<div class="a ed" style="top:1001px">修改</div>
<div class="a ln" style="top:1076px"></div>
<div class="a cb" style="top:1126px"></div>
<div class="a c" style="left:412.5px;width:150px;top:1118.0px">rb8888</div>
<div class="a c" style="left:562.5px;width:147px;top:1118.5px">螺纹钢指数</div>
<div class="a im" style="top:1094px"></div>
<div class="a c" style="left:856.5px;width:147px;top:1118.5px">期货</div>
<div class="a c" style="left:1003.5px;width:147px;top:1118.0px">0</div>
<div class="a c" style="left:1150.5px;width:147px;top:1118.0px">0%</div>
<div class="a c" style="left:1567.5px;width:147px;top:1118.0px">128</div>
<div class="a c" style="left:1714.5px;width:147px;top:1118.0px">30</div>
<div class="a c" style="left:1861.5px;width:147px;top:1118.0px">0</div>
<div class="a c" style="left:2008.5px;width:147px;top:1118.5px">启用</div>
<svg style="left:2350.2px;top:1127.5px" width="15" height="16.500" viewBox="0 0 15 16.500"><g fill="none" stroke="#1890ff" stroke-width="1.250" stroke-linejoin="round" stroke-linecap="round"><path d="M7.300.7l4.600 2.500-5.800 11L1.300 16l-.5-4.300z"/><path d="M5.900 3.400l4.600 2.500"/><path d="M.9 11.800l4.900 2.600"/><path d="M7 15.700h7.300"/></g></svg>
<div class="a ed" style="top:1122px">修改</div>
<div class="a ln" style="top:1197px"></div>
<div class="a cb" style="top:1247px"></div>
<div class="a c" style="left:412.5px;width:150px;top:1239.0px">pb8888</div>
<div class="a c" style="left:562.5px;width:147px;top:1239.5px">沪铅指数</div>
<div class="a im" style="top:1215px"></div>
<div class="a c" style="left:856.5px;width:147px;top:1239.5px">期货</div>
<div class="a c" style="left:1003.5px;width:147px;top:1239.0px">0</div>
<div class="a c" style="left:1150.5px;width:147px;top:1239.0px">0%</div>
<div class="a c" style="left:1567.5px;width:147px;top:1239.0px">128</div>
<div class="a c" style="left:1714.5px;width:147px;top:1239.0px">30</div>
<div class="a c" style="left:1861.5px;width:147px;top:1239.0px">0</div>
<div class="a c" style="left:2008.5px;width:147px;top:1239.5px">启用</div>
<svg style="left:2350.2px;top:1248.5px" width="15" height="16.500" viewBox="0 0 15 16.500"><g fill="none" stroke="#1890ff" stroke-width="1.250" stroke-linejoin="round" stroke-linecap="round"><path d="M7.300.7l4.600 2.500-5.800 11L1.300 16l-.5-4.300z"/><path d="M5.900 3.400l4.600 2.500"/><path d="M.9 11.800l4.900 2.600"/><path d="M7 15.700h7.300"/></g></svg>
<div class="a ed" style="top:1243px">修改</div>
<div class="a ln" style="top:1318px"></div>
<div class="a cb" style="top:1368px"></div>
<div class="a c" style="left:412.5px;width:150px;top:1360.0px">cu8888</div>
<div class="a c" style="left:562.5px;width:147px;top:1360.5px">沪铜指数</div>
<div class="a im" style="top:1336px"></div>
<div class="a c" style="left:856.5px;width:147px;top:1360.5px">期货</div>
<div class="a c" style="left:1003.5px;width:147px;top:1360.0px">0</div>
<div class="a c" style="left:1150.5px;width:147px;top:1360.0px">0%</div>
<div class="a c" style="left:1567.5px;width:147px;top:1360.0px">128</div>
<div class="a c" style="left:1714.5px;width:147px;top:1360.0px">30</div>
<div class="a c" style="left:1861.5px;width:147px;top:1360.0px">0</div>
<div class="a c" style="left:2008.5px;width:147px;top:1360.5px">启用</div>
<svg style="left:2350.2px;top:1369.5px" width="15" height="16.500" viewBox="0 0 15 16.500"><g fill="none" stroke="#1890ff" stroke-width="1.250" stroke-linejoin="round" stroke-linecap="round"><path d="M7.300.7l4.600 2.500-5.800 11L1.300 16l-.5-4.300z"/><path d="M5.900 3.400l4.600 2.500"/><path d="M.9 11.800l4.900 2.600"/><path d="M7 15.700h7.300"/></g></svg>
<div class="a ed" style="top:1364px">修改</div>
<div class="a ln" style="top:1439px"></div>
<svg style="left:1128px;top:1332px" width="210" height="36" viewBox="0 0 210 36"><text x="6" y="26" font-family="Liberation Sans,sans-serif" font-size="23.500" fill="#fff" stroke="#363d4f" stroke-width="2.600" paint-order="stroke" stroke-linejoin="round" textLength="195.500" lengthAdjust="spacingAndGlyphs">www.tiaozhuan.net</text></svg>
</div>
<div class="a" id="btw"></div>
<div class="a" id="bt"></div>
<div class="a" id="bt1"></div>
<div class="a" id="bt2"></div>
</body>
</html>
